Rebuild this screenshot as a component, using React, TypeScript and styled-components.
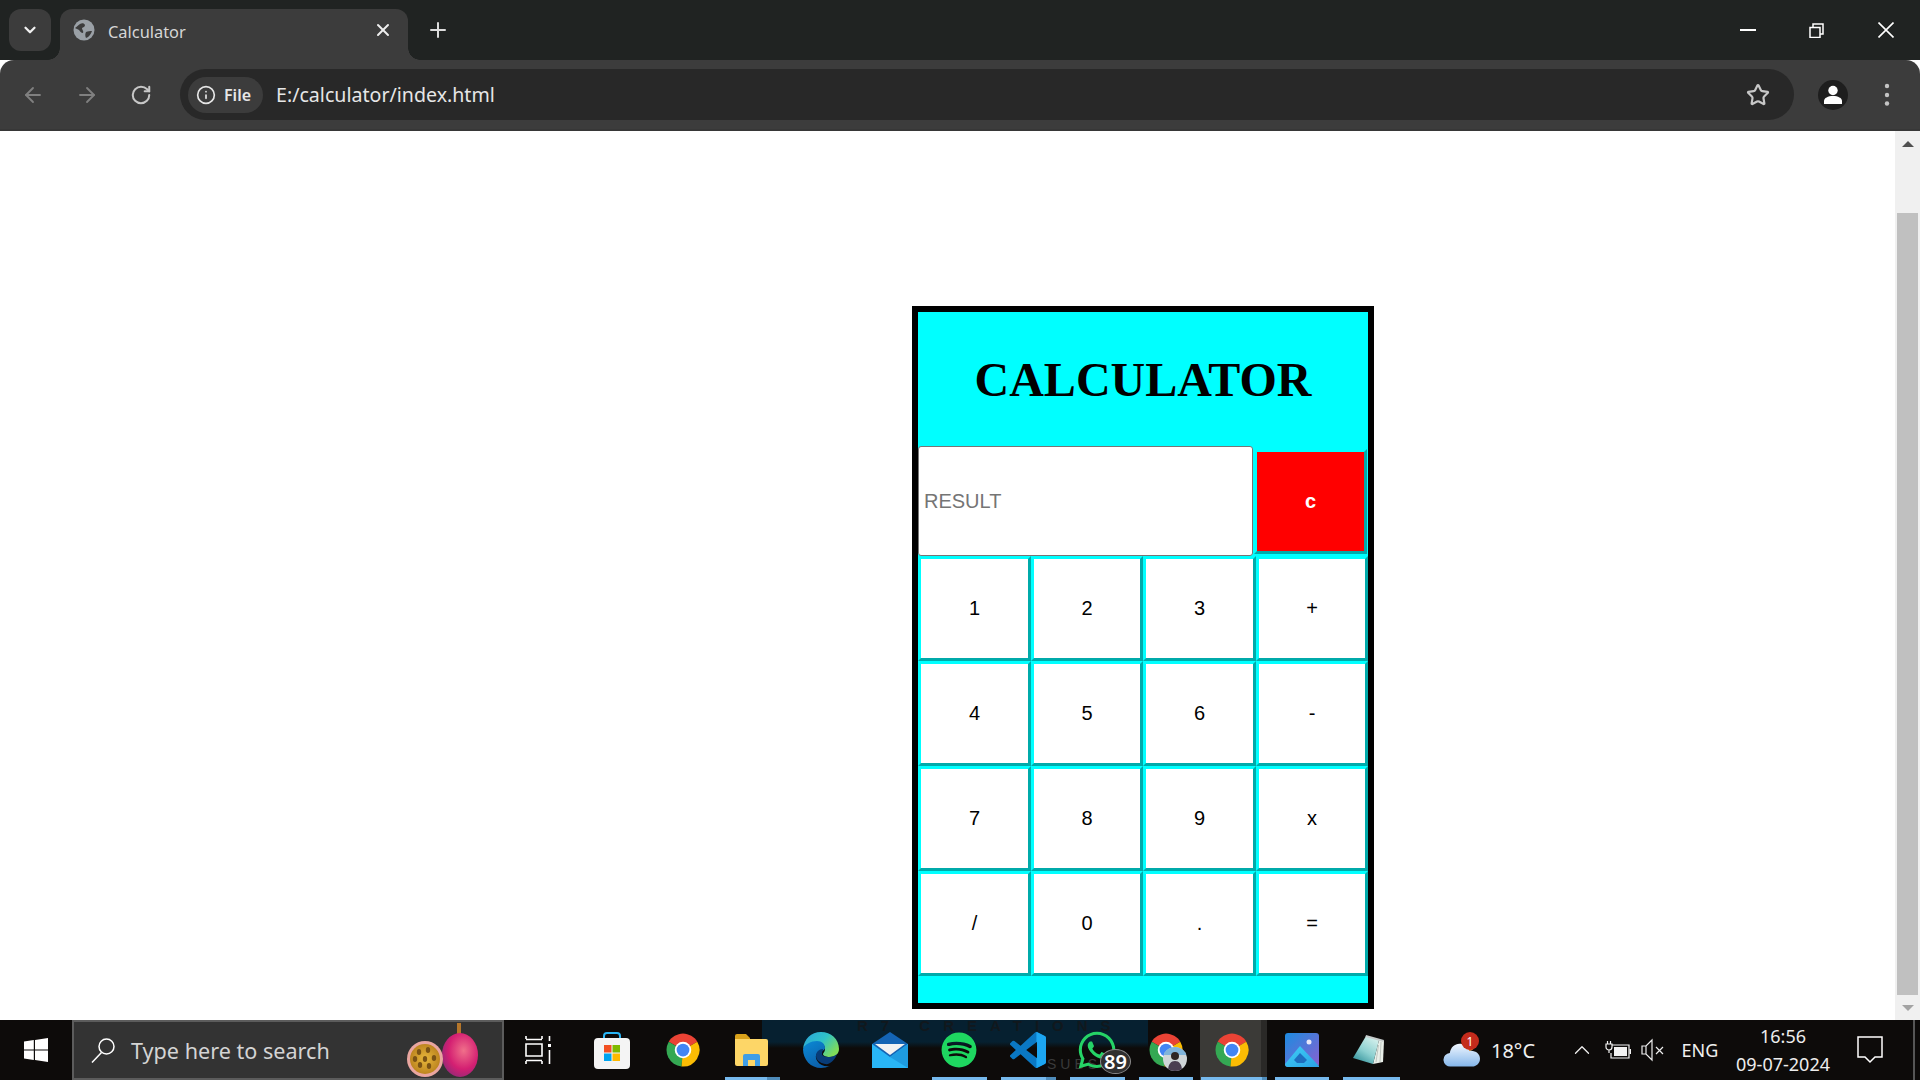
import React from "react";
import styled, { createGlobalStyle } from "styled-components";
import { ArrowLeft, ArrowRight, ChevronDown, Plus, X, Info, RotateCw, Star, ChevronUp } from "lucide-react";
import { FaWhatsapp, FaSpotify } from "react-icons/fa";

const Global = createGlobalStyle`
  html, body { margin: 0; padding: 0; height: 100%; overflow: hidden; background: #fff; }
  #root { height: 100%; }
  * { box-sizing: border-box; }
`;

const ui = `"Noto Sans", "Open Sans", sans-serif`;

const Screen = styled.div`
  width: 1920px;
  height: 1080px;
  display: flex;
  flex-direction: column;
  overflow: hidden;
`;

/* ---------- browser chrome ---------- */
const Strip = styled.div`
  height: 60px;
  background: #202322;
  display: flex;
  align-items: flex-start;
  padding: 9px 0 0 9px;
  color: #fff;
`;
const TabMenu = styled.div`
  width: 42px;
  height: 42px;
  border-radius: 12px;
  background: #3c3c3c;
  display: flex;
  align-items: center;
  justify-content: center;
  color: #f1f1f1;
`;
const Tab = styled.div`
  position: relative;
  margin-left: 9px;
  width: 348px;
  height: 51px;
  background: #3c3c3c;
  border-radius: 12px 12px 0 0;
  display: flex;
  align-items: center;
  padding: 0 15px 9px 13px;
  &::before, &::after {
    content: "";
    position: absolute;
    bottom: 0;
    width: 12px;
    height: 12px;
  }
  &::before { left: -12px; background: radial-gradient(circle at 0 0, transparent 11.5px, #3c3c3c 12px); }
  &::after { right: -12px; background: radial-gradient(circle at 100% 0, transparent 11.5px, #3c3c3c 12px); }
`;
const TabTitle = styled.span`
  font: 400 16.4px ${ui};
  color: #d6d6d6;
  margin-left: 13px;
  margin-top: 2px;
  flex: 1;
`;
const NewTab = styled.div`
  width: 60px;
  height: 42px;
  display: flex;
  align-items: center;
  justify-content: center;
  color: #dcdcdc;
`;
const WindowButtons = styled.div`
  margin-left: auto;
  margin-top: -9px;
  height: 60px;
  display: flex;
  align-items: center;
`;
const WinBtn = styled.div`
  width: 69px;
  height: 58px;
  display: flex;
  align-items: center;
  justify-content: center;
`;

const Toolbar = styled.div`
  height: 71px;
  background: #3c3c3c;
  border-bottom: 2px solid #373737;
  border-radius: 14px 14px 0 0;
  display: flex;
  align-items: center;
  padding: 0 6px;
`;
const ToolBtn = styled.div<{ $c: string }>`
  width: 54px;
  height: 54px;
  display: flex;
  align-items: center;
  justify-content: center;
  color: ${p => p.$c};
`;
const Omnibox = styled.div`
  flex: 1;
  height: 51px;
  margin: 0 12px;
  background: #282828;
  border-radius: 26px;
  display: flex;
  align-items: center;
  padding: 0 24px 0 8px;
`;
const Chip = styled.div`
  width: 75px;
  height: 36px;
  border-radius: 18px;
  background: #3c3c3c;
  display: flex;
  align-items: center;
  padding-left: 8px;
  gap: 8px;
  color: #e6e6e6;
  font: 600 16px ${ui};
`;
const Url = styled.span`
  font: 400 19.6px ${ui};
  color: #e6e6e6;
  margin-left: 13px;
  flex: 1;
`;
const Avatar = styled.div`
  width: 30px;
  height: 30px;
  border-radius: 50%;
  background: #1e1e1e;
  display: flex;
  align-items: center;
  justify-content: center;
`;

/* ---------- page ---------- */
const Viewport = styled.div`
  flex: 1;
  min-height: 0;
  display: flex;
`;
const Page = styled.main`
  flex: 1;
  background: #fff;
  padding: 175px 0 0 912px;
`;
const Scrollbar = styled.aside`
  width: 25px;
  background: #f0f0f0;
  display: flex;
  flex-direction: column;
  align-items: center;
`;
const ScrollArrow = styled.div<{ $up?: boolean }>`
  width: 25px;
  height: 25px;
  display: flex;
  align-items: center;
  justify-content: center;
  &::before {
    content: "";
    border-left: 6px solid transparent;
    border-right: 6px solid transparent;
    ${p => (p.$up ? "border-bottom: 6px solid #505050;" : "border-top: 6px solid #a3a3a3;")}
  }
`;
const ScrollTrack = styled.div`
  flex: 1;
  width: 100%;
  padding: 57px 2px 0;
`;
const Thumb = styled.div`
  height: 782px;
  background: #c0c0c0;
`;

/* ---------- calculator ---------- */
const Calc = styled.div`
  width: 462px;
  height: 703px;
  border: 6px solid #000;
  background: #0ff;
  font-family: "Liberation Sans", Arial, sans-serif;
`;
const Title = styled.h1`
  margin: 0;
  height: 134px;
  display: flex;
  align-items: center;
  justify-content: center;
  font: 700 48px "Liberation Serif", "Times New Roman", serif;
  color: #000;
`;
const DisplayRow = styled.div`
  display: flex;
  height: 110px;
`;
const Result = styled.input`
  width: 335px;
  height: 110px;
  border: 1px solid #767676;
  border-radius: 3px;
  background: #fff;
  padding: 0 5px;
  font: 400 20px "Liberation Sans", Arial, sans-serif;
  outline: none;
  &::placeholder { color: #757575; opacity: 1; }
`;
const Key = styled.button<{ $danger?: boolean }>`
  border-style: solid;
  border-width: 3px;
  border-color: #0ff #00aaaa #00aaaa #0ff;
  border-radius: 0;
  padding: 0;
  background: ${p => (p.$danger ? "#f00" : "#fff")};
  color: ${p => (p.$danger ? "#fff" : "#000")};
  font: ${p => (p.$danger ? 700 : 400)} 20px "Liberation Sans", Arial, sans-serif;
`;
const ClearKey = styled(Key)`
  width: 113px;
  height: 105px;
  margin: 3px 0 0 1px;
`;
const Keys = styled.div`
  display: grid;
  grid-template-columns: 113px 112px 113px 112px;
  grid-auto-rows: 105px;
`;

/* ---------- taskbar ---------- */
const Taskbar = styled.footer`
  position: relative;
  height: 60px;
  background: #0d0b0a;
  display: flex;
  align-items: stretch;
  color: #fff;
`;
const Wallpaper = styled.div`
  position: absolute;
  left: 762px;
  top: 0;
  width: 386px;
  height: 22px;
  background: #062030;
  color: #11181d;
  font: 700 15px/11px "Liberation Sans", sans-serif;
  letter-spacing: 13px;
  padding-left: 95px;
  white-space: nowrap;
`;
const WallpaperLine = styled.div`
  position: absolute;
  left: 762px;
  top: 22px;
  width: 386px;
  height: 6px;
  background: linear-gradient(#062030, #0d0b0a);
`;
const WallpaperSmall = styled.span`
  position: absolute;
  left: 1047px;
  top: 36px;
  color: #3a3a3a;
  font: 400 14px "Liberation Sans", sans-serif;
  letter-spacing: 4px;
`;
const StartBtn = styled.div`
  width: 72px;
  display: flex;
  align-items: center;
  justify-content: center;
`;
const SearchBox = styled.div`
  position: relative;
  width: 432px;
  background: #333;
  border: 2px solid #5c5c5c;
  display: flex;
  align-items: center;
  padding-left: 17px;
  color: #fff;
`;
const SearchText = styled.span`
  font: 400 21.6px ${ui};
  color: #d4d4d4;
  margin-left: 16px;
`;
const FruitArt = styled.svg`
  position: absolute;
  right: 21px;
  top: 0;
`;
const Slot = styled.div<{ $w: number; $active?: boolean }>`
  position: relative;
  width: ${p => p.$w}px;
  display: flex;
  align-items: center;
  justify-content: center;
  padding-right: ${p => (p.$active ? 3 : 0)}px;
  background: ${p => (p.$active ? "linear-gradient(to right, #3b3a37 61px, #2a2927 61px)" : "transparent")};
`;
const Underline = styled.i<{ $l: number; $w: number; $split?: number }>`
  position: absolute;
  bottom: 0;
  left: ${p => p.$l}px;
  width: ${p => p.$w}px;
  height: 3px;
  background: ${p =>
    p.$split ? `linear-gradient(to right, #76b9ed ${p.$split}px, #4f8cba ${p.$split}px)` : "#76b9ed"};
`;
const Badge = styled.span`
  position: absolute;
  left: 38px;
  top: 29px;
  width: 31px;
  height: 25px;
  border-radius: 50%;
  background: #2f2f2f;
  border: 1px solid #8a8a8a;
  font: 600 20px ${ui};
  color: #fff;
  display: flex;
  align-items: center;
  justify-content: center;
`;
const Tray = styled.div`
  margin-left: auto;
  display: flex;
  align-items: stretch;
  position: relative;
`;
const TrayItem = styled.div<{ $w: number; $mr?: number }>`
  position: relative;
  width: ${p => p.$w}px;
  margin-right: ${p => p.$mr || 0}px;
  display: flex;
  align-items: center;
  justify-content: center;
  font: 400 18px ${ui};
  color: #f0f0f0;
  white-space: nowrap;
`;
const Temp = styled(TrayItem)`
  font-size: 20px;
`;
const WeatherBadge = styled.span`
  position: absolute;
  left: 18px;
  top: 12px;
  width: 18px;
  height: 18px;
  border-radius: 50%;
  background: #c42b1c;
  font: 400 12px ${ui};
  display: flex;
  align-items: center;
  justify-content: center;
  color: #fff;
`;
const Clock = styled.div`
  width: 110px;
  display: flex;
  flex-direction: column;
  align-items: center;
  justify-content: center;
  gap: 3px;
  font: 400 18px/25px ${ui};
  color: #ededed;
`;
const ShowDesktop = styled.div`
  width: 7px;
  border-left: 2px solid #565656;
  margin-left: 11px;
`;

/* ---------- drawings ---------- */
const ChromeIcon = ({ size = 36 }: { size?: number }) => (
  <svg width={size} height={size} viewBox="0 0 48 48">
    <path d="M24 24 L5 13 A22 22 0 0 1 43 13 Z" fill="#ea4335" />
    <path d="M24 24 L5 13 A22 22 0 0 0 22 46 Z" fill="#34a853" />
    <path d="M24 24 L43 13 A22 22 0 0 1 22 46 Z" fill="#fbbc04" />
    <circle cx="24" cy="24" r="11" fill="#fff" />
    <circle cx="24" cy="24" r="8.5" fill="#4285f4" />
  </svg>
);

const Globe = () => (
  <svg width="22" height="22" viewBox="0 0 22 22">
    <circle cx="11" cy="11" r="10.5" fill="#9aa0a6" />
    <path d="M2 9c2-1 3-3 5-4 2-1 4-1 5 1 0 2-2 2-3 3 0 2 2 3 1 5-2 0-3-2-4-3-1-1-3-1-4-2z" fill="#3c3c3c" />
    <path d="M13 13c2-1 4-1 6-1-1 3-3 6-6 7-1-2-1-4 0-6z" fill="#3c3c3c" />
  </svg>
);

const WinLogo = () => (
  <svg width="24" height="24" viewBox="0 0 24 24" fill="#fff">
    <path d="M0 3.4 9.8 2v9.4H0zM11 1.900 24 0v11.4H11zM0 12.600h9.8V22L0 20.600zM11 12.600h13V24l-13-1.900z" />
  </svg>
);

const SearchGlyph = () => (
  <svg width="24" height="25" viewBox="0 0 24 25" fill="none" stroke="#fff" strokeWidth="1.5">
    <circle cx="15.500" cy="8.500" r="7.500" />
    <path d="M10.500 14.500 1 24.500" />
  </svg>
);

const Fruit = () => (
  <FruitArt width="80" height="56" viewBox="0 0 80 56">
    <defs>
      <radialGradient id="mango" cx="0.6" cy="0.4" r="0.7">
        <stop offset="0" stopColor="#f0708a" />
        <stop offset="0.6" stopColor="#d41f72" />
        <stop offset="1" stopColor="#8c2a78" />
      </radialGradient>
      <radialGradient id="pulp" cx="0.5" cy="0.5" r="0.55">
        <stop offset="0" stopColor="#e8b83c" />
        <stop offset="1" stopColor="#b9801c" />
      </radialGradient>
    </defs>
    <rect x="56" y="1" width="4" height="12" fill="#b5762a" />
    <ellipse cx="59" cy="33" rx="18" ry="22" fill="url(#mango)" />
    <ellipse cx="24" cy="37" rx="18" ry="18" fill="#e9a6a0" />
    <ellipse cx="24" cy="37" rx="15" ry="15" fill="url(#pulp)" />
    {[[18, 30], [27, 28], [33, 36], [28, 44], [19, 43], [14, 37], [24, 37]].map(([x, y], i) => (
      <ellipse key={i} cx={x} cy={y} rx="2.2" ry="3" fill="#7a5214" />
    ))}
  </FruitArt>
);

const TaskView = () => (
  <svg width="28" height="30" viewBox="0 0 28 30" fill="none" stroke="#fff" strokeWidth="1.6">
    <path d="M1 4.500h16M1 25.500h16M1 9h16v12H1z" />
    <path d="M1 1v3M17 1v3M1 26v3M17 26v3" />
    <rect x="23" y="9" width="3" height="3" fill="#fff" stroke="none" />
    <path d="M24.500 15v14M24.500 1v5" />
  </svg>
);

const StoreIcon = () => (
  <svg width="36" height="38" viewBox="0 0 36 38">
    <path d="M10 8V5a3 3 0 0 1 3-3h10a3 3 0 0 1 3 3v3" fill="none" stroke="#29b6f6" strokeWidth="2" />
    <rect x="0" y="7" width="36" height="31" rx="4" fill="#f4f4f4" />
    <rect x="10" y="14" width="7.500" height="7.500" fill="#f25022" />
    <rect x="18.500" y="14" width="7.500" height="7.500" fill="#7fba00" />
    <rect x="10" y="22.500" width="7.500" height="7.500" fill="#00a4ef" />
    <rect x="18.500" y="22.500" width="7.500" height="7.500" fill="#ffb900" />
  </svg>
);

const FolderIcon = () => (
  <svg width="33" height="36" viewBox="0 0 33 36">
    <path d="M0 4a2 2 0 0 1 2-2h9l4 4v4H0z" fill="#d9a21b" />
    <path d="M0 7h31a2 2 0 0 1 2 2v23a2 2 0 0 1-2 2H2a2 2 0 0 1-2-2z" fill="#fdd667" />
    <path d="M8 24a2 2 0 0 1 2-2h13a2 2 0 0 1 2 2v10h-5v-6h-7v6H8z" fill="#3f9ee6" />
  </svg>
);

const EdgeIcon = () => (
  <svg width="36" height="36" viewBox="0 0 36 36">
    <defs>
      <linearGradient id="edgeA" x1="0" y1="0" x2="1" y2="0.6">
        <stop offset="0" stopColor="#2aa3dc" />
        <stop offset="0.55" stopColor="#2fc2c8" />
        <stop offset="1" stopColor="#7fdc5a" />
      </linearGradient>
      <linearGradient id="edgeB" x1="0" y1="0" x2="0.6" y2="1">
        <stop offset="0" stopColor="#0a8ad6" />
        <stop offset="1" stopColor="#0c5ea8" />
      </linearGradient>
    </defs>
    <path d="M18 0C28 0 36 7 36 17c0 5-4 8-9 8-4 0-7-1-7-3 0-1 2-2 2-5 0-4-3-7-7-7C8 10 2 13 0 17 1 7 8 0 18 0z" fill="url(#edgeA)" />
    <path d="M0 17c2-5 8-8 14-8 5 0 8 3 8 7 0 2-3 3-6 4-4 2-4 6-1 10 2 3 7 5 12 4-3 1-6 2-9 2C8 36 0 28 0 17z" fill="url(#edgeB)" />
    <path d="M13 24c0-4 3-7 7-7 0 2-1 3-1 5 0 2 3 3 7 3 3 0 6-1 8-3-2 6-7 11-12 10-5-1-9-4-9-8z" fill="#083c78" />
  </svg>
);

const MailIcon = () => (
  <svg width="36" height="36" viewBox="0 0 36 36">
    <path d="M0 12 18 0l18 12v4L18 28 0 16z" fill="#1464b4" />
    <path d="M3 12h30l-15 11z" fill="#f2f2f2" />
    <path d="M0 12l18 13 18-13v24H0z" fill="#29b6f6" />
    <path d="M18 25l18-13v24z" fill="#1e9be0" />
  </svg>
);

const VS_PATH =
  "M23.15 2.587L18.21.21a1.494 1.494 0 0 0-1.705.29l-9.46 8.63-4.12-3.128a.999.999 0 0 0-1.276.057L.327 7.261A1 1 0 0 0 .326 8.74L3.899 12 .326 15.26a1 1 0 0 0 .001 1.479L1.65 17.94a.999.999 0 0 0 1.276.057l4.12-3.128 9.46 8.63a1.492 1.492 0 0 0 1.704.29l4.942-2.377A1.500 1.500 0 0 0 24 20.06V3.939a1.500 1.500 0 0 0-.85-1.352zm-5.146 14.861L10.826 12l7.178-5.448v10.896z";

const VsCode = () => (
  <svg width="36" height="36" viewBox="0 0 24 24">
    <clipPath id="vsClip"><path d={VS_PATH} /></clipPath>
    <path d={VS_PATH} fill="#0a78c4" />
    <rect x="17.600" y="0" width="7" height="24" fill="#1ca6f2" clipPath="url(#vsClip)" />
  </svg>
);

const ProfileDot = () => (
  <svg width="24" height="24" viewBox="0 0 24 24" style={{ position: "absolute", left: 32, top: 27 }}>
    <clipPath id="pd"><circle cx="12" cy="12" r="12" /></clipPath>
    <g clipPath="url(#pd)">
      <rect width="24" height="24" fill="#cfd6d8" />
      <rect width="24" height="8" fill="#7fb4da" />
      <circle cx="12" cy="9" r="4" fill="#2d2624" />
      <path d="M5 24c0-7 3-10 7-10s7 3 7 10z" fill="#4a3f52" />
    </g>
  </svg>
);

const PhotosIcon = () => (
  <svg width="34" height="34" viewBox="0 0 34 34">
    <defs>
      <linearGradient id="ph" x1="0" y1="0" x2="1" y2="1">
        <stop offset="0" stopColor="#1c8ce0" />
        <stop offset="1" stopColor="#8a5fd0" />
      </linearGradient>
      <linearGradient id="ph2" x1="0" y1="0" x2="1" y2="1">
        <stop offset="0" stopColor="#3fd0f5" />
        <stop offset="1" stopColor="#2aa2e8" />
      </linearGradient>
    </defs>
    <rect width="34" height="34" rx="3" fill="url(#ph)" />
    <circle cx="24" cy="9" r="2.500" fill="#e8e8f8" />
    <path d="M0 31 15 13 34 33v1H3a3 3 0 0 1-3-3z" fill="url(#ph2)" />
    <path d="M9 27 15 20l7 7-3 3h-7z" fill="#1e6fc0" />
  </svg>
);

const NotepadIcon = () => (
  <svg width="32" height="30" viewBox="0 0 32 30">
    <defs>
      <linearGradient id="np" x1="0.8" y1="0" x2="0.2" y2="1">
        <stop offset="0" stopColor="#d9f2ee" />
        <stop offset="0.55" stopColor="#8cd0d0" />
        <stop offset="1" stopColor="#2f8f98" />
      </linearGradient>
    </defs>
    <path d="M26 5 31 6 30 27 20 29z" fill="#e9efe9" />
    <path d="M28 7 27 27M25.500 10 23 27" stroke="#b4bcb6" strokeWidth="0.8" />
    <path d="M13 1 26 5 20 29 0 23z" fill="url(#np)" />
    <path d="M13 0 31 5 30.500 7 12.500 2z" fill="#c6cccc" />
  </svg>
);

const CloudIcon = () => (
  <svg width="38" height="33" viewBox="0 -3 38 33">
    <defs>
      <linearGradient id="cl" x1="0" y1="0" x2="0" y2="1">
        <stop offset="0" stopColor="#f1f7ff" />
        <stop offset="1" stopColor="#84b6ea" />
      </linearGradient>
    </defs>
    <circle cx="27" cy="9" r="5" fill="#f08a24" />
    <path d="M8 30a7 7 0 0 1-1-14c1-7 7-11 13-9 3 1 6 3 7 7 6-1 11 3 11 8s-4 8-8 8z" fill="url(#cl)" />
  </svg>
);

const Battery = () => (
  <svg width="26" height="18" viewBox="0 0 26 18" fill="none" stroke="#f2f2f2" strokeWidth="1.200">
    <path d="M7 4h17v13H6v-5" />
    <rect x="9" y="6" width="13" height="9" fill="#f2f2f2" stroke="none" />
    <rect x="24.500" y="8" width="1.500" height="5" fill="#f2f2f2" stroke="none" />
    <path d="M2.500 0v3M5.500 0v3M1 3h6v3a3 3 0 0 1-6 0zM4 9v3" />
  </svg>
);

const Mute = () => (
  <svg width="24" height="24" viewBox="0 0 24 24" fill="none" stroke="#eee" strokeWidth="1.200">
    <path d="M1 8h4l6-6v20l-6-6H1zM5 8v8" />
    <path d="M15 9l7 7M22 9l-7 7" />
  </svg>
);

const Notification = () => (
  <svg width="26" height="28" viewBox="0 0 26 28" fill="none" stroke="#fff" strokeWidth="1.500">
    <path d="M1 1h24v20h-7l-5 5-5-5H1z" />
  </svg>
);

const User = () => (
  <svg width="20" height="20" viewBox="0 0 20 20" fill="#fff">
    <circle cx="10" cy="5.500" r="4.700" />
    <path d="M1 19v-3c0-3 4-5 9-5s9 2 9 5v3z" />
  </svg>
);

const Dots = () => (
  <svg width="6" height="24" viewBox="0 0 6 24" fill="#c4c4c4">
    <circle cx="3" cy="3" r="2.200" />
    <circle cx="3" cy="12" r="2.200" />
    <circle cx="3" cy="20.500" r="2.200" />
  </svg>
);

const RESTORE = "M1 4.500h10v10H1zM4 4.500V1h10v10h-3";

const keys = ["1", "2", "3", "+", "4", "5", "6", "-", "7", "8", "9", "x", "/", "0", ".", "="];

export default function App() {
  return (
    <Screen>
      <Global />
      <Strip>
        <TabMenu><ChevronDown size={18} strokeWidth={3} /></TabMenu>
        <Tab>
          <Globe />
          <TabTitle>Calculator</TabTitle>
          <X size={20} strokeWidth={2.4} color="#eee" />
        </Tab>
        <NewTab><Plus size={24} strokeWidth={2} /></NewTab>
        <WindowButtons>
          <WinBtn>
            <svg width="16" height="2"><rect width="16" height="2" fill="#fff" /></svg>
          </WinBtn>
          <WinBtn>
            <svg width="15" height="15" viewBox="0 0 15 15" fill="none" stroke="#fff" strokeWidth="1.5"><path d={RESTORE} /></svg>
          </WinBtn>
          <WinBtn>
            <svg width="16" height="16" viewBox="0 0 16 16" stroke="#fff" strokeWidth="1.6"><path d="M.5.5l15 15M15.500.5l-15 15" /></svg>
          </WinBtn>
        </WindowButtons>
      </Strip>
      <Toolbar>
        <ToolBtn $c="#808080"><ArrowLeft size={24} strokeWidth={1.8} /></ToolBtn>
        <ToolBtn $c="#808080"><ArrowRight size={24} strokeWidth={1.8} /></ToolBtn>
        <ToolBtn $c="#c7c7c7"><RotateCw size={22} strokeWidth={2.2} /></ToolBtn>
        <Omnibox>
          <Chip><Info size={20} strokeWidth={2} />File</Chip>
          <Url>E:/calculator/index.html</Url>
          <Star size={24} strokeWidth={2.2} color="#c7c7c7" />
        </Omnibox>
        <ToolBtn $c="#fff"><Avatar><User /></Avatar></ToolBtn>
        <ToolBtn $c="#c7c7c7"><Dots /></ToolBtn>
      </Toolbar>
      <Viewport>
        <Page>
          <Calc>
            <Title>CALCULATOR</Title>
            <DisplayRow>
              <Result placeholder="RESULT" readOnly />
              <ClearKey $danger>c</ClearKey>
            </DisplayRow>
            <Keys>
              {keys.map(k => <Key key={k}>{k}</Key>)}
            </Keys>
          </Calc>
        </Page>
        <Scrollbar>
          <ScrollArrow $up />
          <ScrollTrack><Thumb /></ScrollTrack>
          <ScrollArrow />
        </Scrollbar>
      </Viewport>
      <Taskbar>
        <Wallpaper>R7 CREATIONS</Wallpaper>
        <WallpaperLine />
        <WallpaperSmall>SUBS</WallpaperSmall>
        <StartBtn><WinLogo /></StartBtn>
        <SearchBox>
          <SearchGlyph />
          <SearchText>Type here to search</SearchText>
          <Fruit />
        </SearchBox>
        <Slot $w={70}><TaskView /></Slot>
        <Slot $w={75}><StoreIcon /></Slot>
        <Slot $w={68}><ChromeIcon /></Slot>
        <Slot $w={69}><FolderIcon /><Underline $l={8} $w={55} $split={42} /></Slot>
        <Slot $w={69}><EdgeIcon /></Slot>
        <Slot $w={69}><MailIcon /></Slot>
        <Slot $w={69}><FaSpotify size={36} color="#1ed760" /><Underline $l={8} $w={55} /></Slot>
        <Slot $w={69}><VsCode /><Underline $l={8} $w={55} $split={45} /></Slot>
        <Slot $w={69}><FaWhatsapp size={42} color="#25d366" /><Underline $l={8} $w={55} /><Badge>89</Badge></Slot>
        <Slot $w={69}><ChromeIcon /><ProfileDot /><Underline $l={8} $w={54} /></Slot>
        <Slot $w={67} $active><ChromeIcon /><Underline $l={1} $w={66} $split={61} /></Slot>
        <Slot $w={69}><PhotosIcon /><Underline $l={8} $w={54} /></Slot>
        <Slot $w={66}><NotepadIcon /><Underline $l={7} $w={57} /></Slot>
        <Tray>
          <TrayItem $w={37} $mr={12}><CloudIcon /><WeatherBadge>1</WeatherBadge></TrayItem>
          <Temp $w={42} $mr={31}>18°C</Temp>
          <TrayItem $w={34} $mr={5}><ChevronUp size={26} strokeWidth={1.2} /></TrayItem>
          <TrayItem $w={28} $mr={8}><Battery /></TrayItem>
          <TrayItem $w={26} $mr={14}><Mute /></TrayItem>
          <TrayItem $w={40} $mr={8}>ENG</TrayItem>
          <Clock><span>16:56</span><span>09-07-2024</span></Clock>
          <TrayItem $w={64}><Notification /></TrayItem>
          <ShowDesktop />
        </Tray>
      </Taskbar>
    </Screen>
  );
}
